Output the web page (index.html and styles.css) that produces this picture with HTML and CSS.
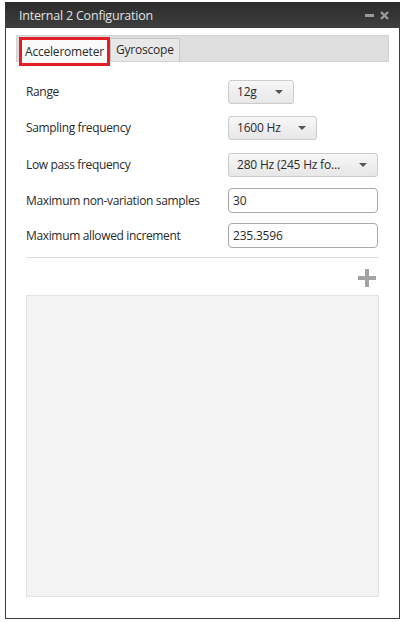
FILE: index.html
```html
<!DOCTYPE html>
<html>
<head>
<meta charset="utf-8">
<link rel="stylesheet" href="styles.css">
</head>
<body>
<div class="window">
  <div class="titlebar">
    <span class="title">Internal 2 Configuration</span>
    <div class="controls">
      <span class="min"></span>
      <svg class="close" width="9" height="9" viewBox="0 0 9 9"><path d="M1 1L8 8M8 1L1 8" stroke="#9a9a9a" stroke-width="2.4"/></svg>
    </div>
  </div>
  <div class="body">
    <div class="tabs">
      <div class="tab active">Accelerometer</div>
      <div class="tab">Gyroscope</div>
    </div>
    <div class="form">
      <div class="row">
        <span class="label">Range</span>
        <div class="select w-range"><span>12g</span><i class="caret"></i></div>
      </div>
      <div class="row">
        <span class="label">Sampling frequency</span>
        <div class="select w-samp"><span>1600 Hz</span><i class="caret"></i></div>
      </div>
      <div class="row row-lp">
        <span class="label">Low pass frequency</span>
        <div class="select w-full"><span>280 Hz (245 Hz fo...</span><i class="caret"></i></div>
      </div>
      <div class="row">
        <span class="label">Maximum non-variation samples</span>
        <div class="input w-full">30</div>
      </div>
      <div class="row row-last">
        <span class="label">Maximum allowed increment</span>
        <div class="input w-full">235.3596</div>
      </div>
    </div>
    <div class="sep"></div>
    <div class="addrow">
      <svg width="20" height="20" viewBox="0 0 20 20"><path d="M10 1V19M1 10H19" stroke="#a3a3a3" stroke-width="4"/></svg>
    </div>
    <div class="panel"></div>
  </div>
</div>
</body>
</html>
```
FILE: styles.css
```css
* { box-sizing: border-box; }
html, body { margin: 0; padding: 0; background: #fff; }
body {
  width: 402px;
  height: 622px;
  padding: 2px 2px 3px 5px;
  font-family: "Open Sans", "Noto Sans", sans-serif;
  font-size: 12px;
  color: #2a2a2a;
}
.window {
  width: 395px;
  height: 617px;
  border: 1px solid #3c3c3c;
  border-top: none;
  display: flex;
  flex-direction: column;
  background: #fff;
}
.titlebar {
  height: 26px;
  margin: 0 -1px;
  background: linear-gradient(#2c2c2c, #3e3e3e);
  display: flex;
  align-items: center;
  justify-content: space-between;
  padding: 0 11px 0 14px;
}
.title {
  color: #e2e2e2;
  font-size: 12.5px;
  letter-spacing: -0.2px;
}
.controls {
  display: flex;
  align-items: center;
  gap: 6px;
}
.min {
  display: block;
  width: 9px;
  height: 3px;
  background: #9a9a9a;
}
.close { display: block; }
.body {
  flex: 1;
  display: flex;
  flex-direction: column;
  padding: 7px 20px 21px 10px;
}
.tabs {
  height: 27px;
  background: #dedede;
  border: 1px solid #d2d2d2;
  display: flex;
  align-items: flex-end;
  padding-left: 2px;
  margin-right: -10px;
}
.tab {
  height: 23px;
  line-height: 21px;
  padding: 0 5px;
  background: #e8e8e8;
  border: 1px solid #c6c6c6;
  border-bottom: none;
  border-radius: 2px 2px 0 0;
  color: #2a2a2a;
  font-size: 12px;
  letter-spacing: -0.2px;
}
.tab.active {
  height: 29px;
  line-height: 23px;
  background: #fafafa;
  border: 3px solid #e41e26;
  border-radius: 0;
  padding: 0 3px;
  margin-bottom: -5px;
  position: relative;
}
.form {
  display: flex;
  flex-direction: column;
  gap: 11px;
  padding: 17px 0 0 10px;
}
.row {
  display: flex;
  align-items: center;
  height: 25px;
}
.row-lp { margin-top: 1px; }
.row-last { margin-top: -1px; }
.label {
  width: 202px;
  letter-spacing: -0.35px;
}
.select {
  height: 24px;
  border: 1px solid #cbcbcb;
  border-radius: 3px;
  background: linear-gradient(#f7f7f7, #e7e7e7);
  display: flex;
  align-items: center;
  justify-content: space-between;
  padding: 0 10px 0 8px;
  letter-spacing: -0.2px;
}
.caret {
  width: 0;
  height: 0;
  border-left: 4px solid transparent;
  border-right: 4px solid transparent;
  border-top: 4px solid #555;
}
.w-range { width: 66px; }
.w-samp { width: 89px; }
.w-full { width: 150px; }
.input {
  height: 25px;
  border: 1px solid #a8a8a8;
  border-radius: 4px;
  background: #fff;
  display: flex;
  align-items: center;
  padding: 0 4px;
  letter-spacing: -0.2px;
}
.sep {
  height: 1px;
  background: #dcdcdc;
  margin: 9px 0 0 10px;
}
.addrow {
  display: flex;
  justify-content: flex-end;
  padding: 10px 2px 0 0;
  height: 37px;
}
.panel {
  flex: 1;
  margin-left: 10px;
  background: #f3f3f3;
  border: 1px solid #e2e2e2;
}
```
